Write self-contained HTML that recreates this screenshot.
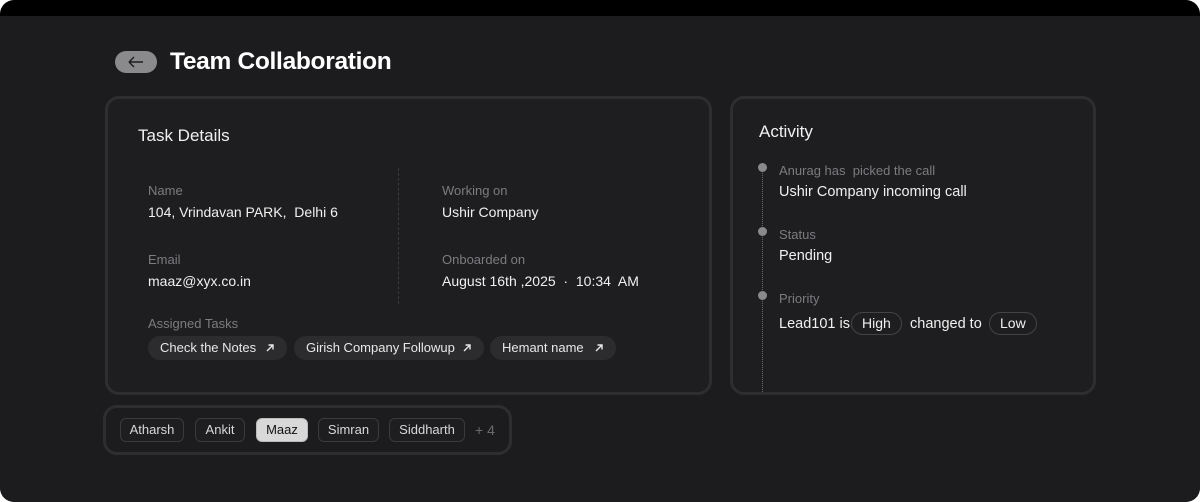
<!DOCTYPE html>
<html><head><meta charset="utf-8"><style>
*{margin:0;padding:0;box-sizing:border-box}
html,body{width:1200px;height:502px;background:#fff;overflow:hidden;font-family:"Liberation Sans",sans-serif}
.frame{position:absolute;left:0;top:0;width:1200px;height:502px;background:#000;border-radius:14px;overflow:hidden}
.panel{position:absolute;left:0;top:16px;width:1200px;height:486px;background:#1c1c1e;border-radius:0 0 14px 14px}
.abs{position:absolute;white-space:nowrap}
.back{position:absolute;left:115px;top:51px;width:42px;height:22px;border-radius:11px;background:#8a8a8c}
.card{position:absolute;border:3px solid #2e2e30;border-radius:14px;background:#1e1e20}
.lbl{color:#7c7c80;font-size:13px}
.val{color:#f0f0f0;font-size:14px}
.pill{position:absolute;height:24px;border-radius:12px;background:#2c2c2e;color:#e8e8e8;font-size:13px;line-height:24px;padding:0 12px}
.pill svg{position:absolute;right:12px;top:7px}
.tag{position:absolute;top:418px;height:24px;border:1px solid #3a3a3c;border-radius:6px;color:#d8d8d8;font-size:13px;line-height:22px;text-align:center;background:#1e1e20}
.dot{position:absolute;left:758px;width:9px;height:9px;border-radius:50%;background:#8a8a8c}
.chip{position:absolute;top:312px;height:23px;border:1px solid #444;border-radius:12px;color:#f0f0f0;font-size:14px;line-height:21px;padding:0 10px}
</style></head><body>
<div class="frame"><div class="panel"></div>
<div class="back"><svg width="42" height="22" viewBox="0 0 42 22"><path d="M14 11H28M14 11L19 6M14 11L19 16" stroke="#1c1c1e" stroke-width="1.4" fill="none"/></svg></div>
<div class="abs" style="left:170px;top:48px;color:#fff;font-size:24.5px;font-weight:bold;letter-spacing:-0.3px">Team Collaboration</div>

<div class="card" style="left:105px;top:96px;width:607px;height:299px"></div>
<div class="abs" style="left:138px;top:126px;color:#f0f0f0;font-size:17px">Task Details</div>
<div style="position:absolute;left:398px;top:168px;height:136px;border-left:1px dashed #3a3a3c"></div>
<div class="abs lbl" style="left:148px;top:183px">Name</div>
<div class="abs val" style="left:148px;top:204px">104, Vrindavan PARK,&nbsp; Delhi 6</div>
<div class="abs lbl" style="left:148px;top:252px">Email</div>
<div class="abs val" style="left:148px;top:273px">maaz@xyx.co.in</div>
<div class="abs lbl" style="left:442px;top:183px">Working on</div>
<div class="abs val" style="left:442px;top:204px">Ushir Company</div>
<div class="abs lbl" style="left:442px;top:252px">Onboarded on</div>
<div class="abs val" style="left:442px;top:273px">August 16th ,2025 &nbsp;&#183;&nbsp; 10:34&nbsp; AM</div>
<div class="abs lbl" style="left:148px;top:316px">Assigned Tasks</div>
<div class="pill" style="left:148px;top:336px;width:139px">Check the Notes<svg width="10" height="10" viewBox="0 0 10 10"><path d="M2 8L8 2M3.5 2H8V6.5" stroke="#e8e8e8" stroke-width="1.4" fill="none"/></svg></div>
<div class="pill" style="left:294px;top:336px;width:190px">Girish Company Followup<svg width="10" height="10" viewBox="0 0 10 10"><path d="M2 8L8 2M3.5 2H8V6.5" stroke="#e8e8e8" stroke-width="1.4" fill="none"/></svg></div>
<div class="pill" style="left:490px;top:336px;width:126px">Hemant name<svg width="10" height="10" viewBox="0 0 10 10"><path d="M2 8L8 2M3.5 2H8V6.5" stroke="#e8e8e8" stroke-width="1.4" fill="none"/></svg></div>

<div class="card" style="left:730px;top:96px;width:366px;height:299px"></div>
<div class="abs" style="left:759px;top:122px;color:#f0f0f0;font-size:17px">Activity</div>
<div style="position:absolute;left:762px;top:170px;height:222px;border-left:1px dotted #6a6a6c"></div>
<div class="dot" style="top:163px"></div>
<div class="dot" style="top:227px"></div>
<div class="dot" style="top:291px"></div>
<div class="abs lbl" style="left:779px;top:163px">Anurag has&nbsp; picked the call</div>
<div class="abs val" style="left:779px;top:184px;font-size:14.5px">Ushir Company incoming call</div>
<div class="abs lbl" style="left:779px;top:227px">Status</div>
<div class="abs val" style="left:779px;top:248px;font-size:14.5px">Pending</div>
<div class="abs lbl" style="left:779px;top:291px">Priority</div>
<div class="abs val" style="left:779px;top:316px;font-size:14.5px">Lead101 is</div>
<div class="chip" style="left:851px">High</div>
<div class="abs val" style="left:910px;top:316px;font-size:14.5px">changed to</div>
<div class="chip" style="left:989px">Low</div>

<div class="card" style="left:103px;top:405px;width:409px;height:50px;background:#1c1c1e"></div>
<div class="tag" style="left:120px;width:64px">Atharsh</div>
<div class="tag" style="left:195px;width:50px">Ankit</div>
<div class="tag" style="left:256px;width:52px;background:#d8d8d8;color:#111;border-color:#bbb">Maaz</div>
<div class="tag" style="left:318px;width:61px">Simran</div>
<div class="tag" style="left:389px;width:76px">Siddharth</div>
<div class="abs" style="left:475px;top:422px;color:#6a6a6c;font-size:14px">+ 4</div>
</div>
</body></html>
